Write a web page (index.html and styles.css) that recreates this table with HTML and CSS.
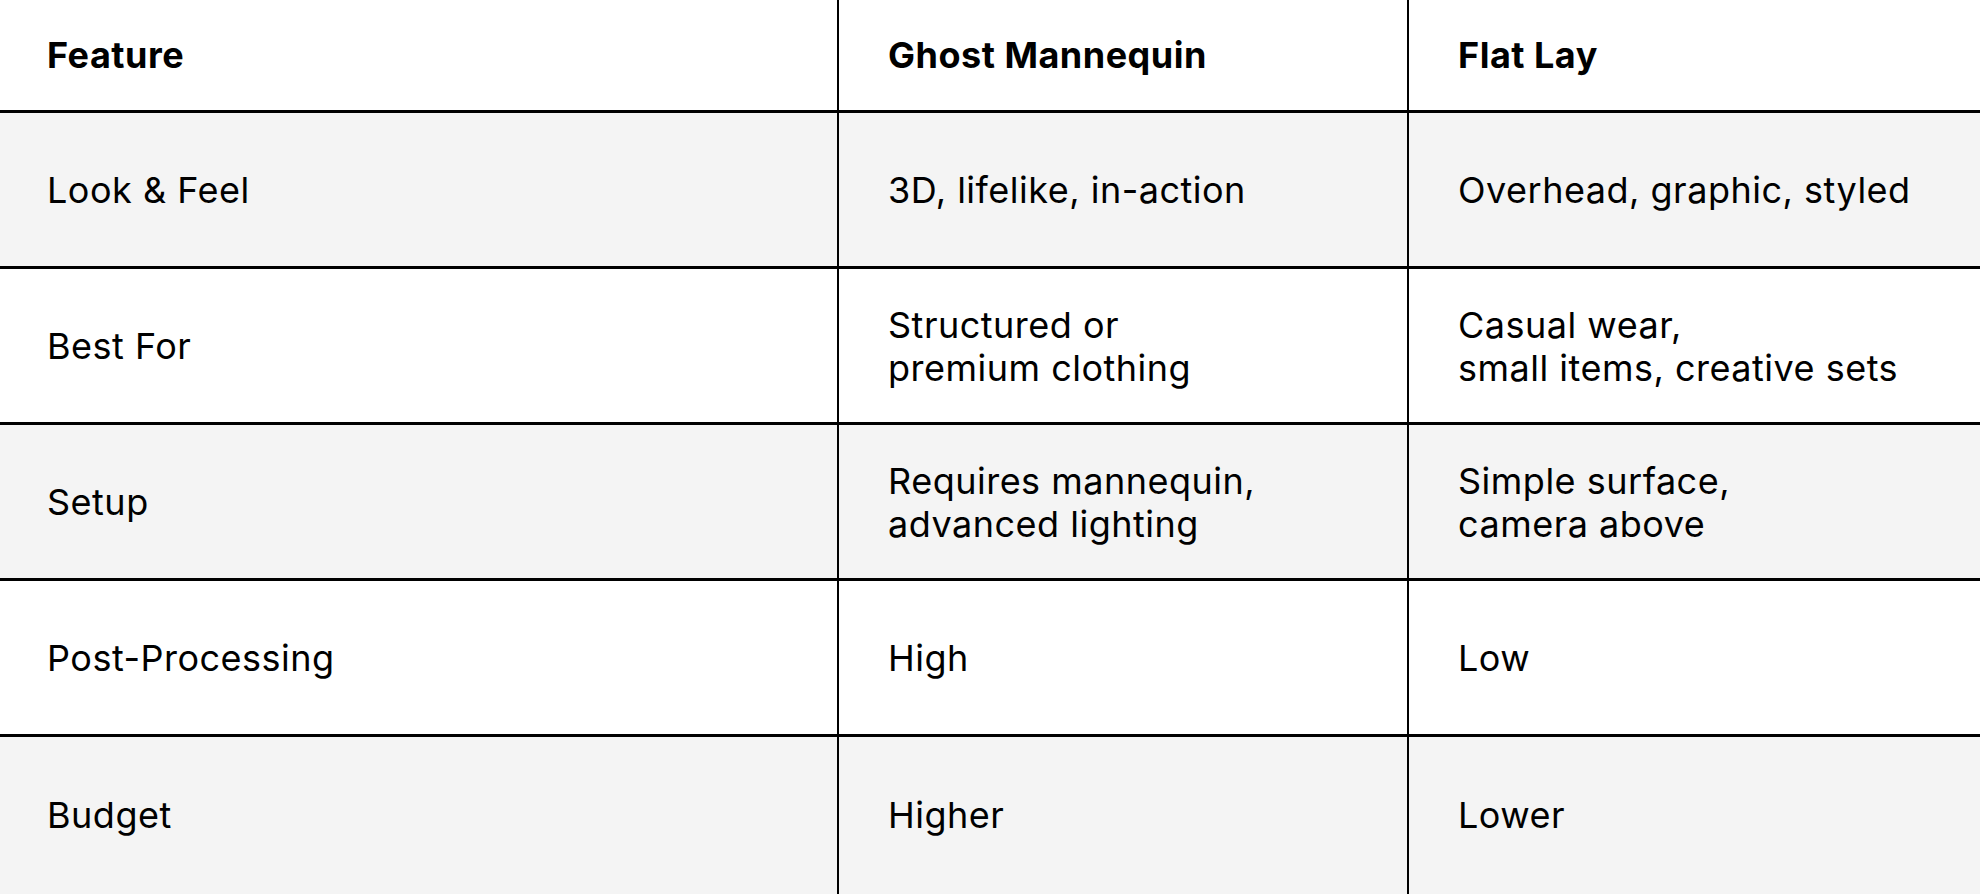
FILE: index.html
```html
<!DOCTYPE html>
<html lang="en">
<head>
<meta charset="utf-8">
<title>Ghost Mannequin vs Flat Lay</title>
<link rel="stylesheet" href="styles.css">
</head>
<body>
<div class="table">
  <div class="row head">
    <div class="cell">Feature</div>
    <div class="cell">Ghost Mannequin</div>
    <div class="cell">Flat Lay</div>
  </div>
  <div class="row alt">
    <div class="cell">Look &amp; Feel</div>
    <div class="cell">3D, lifelike, in-action</div>
    <div class="cell">Overhead, graphic, styled</div>
  </div>
  <div class="row">
    <div class="cell">Best For</div>
    <div class="cell">Structured or<br>premium clothing</div>
    <div class="cell">Casual wear,<br>small items, creative sets</div>
  </div>
  <div class="row alt">
    <div class="cell">Setup</div>
    <div class="cell">Requires mannequin,<br>advanced lighting</div>
    <div class="cell">Simple surface,<br>camera above</div>
  </div>
  <div class="row">
    <div class="cell">Post-Processing</div>
    <div class="cell">High</div>
    <div class="cell">Low</div>
  </div>
  <div class="row alt last">
    <div class="cell">Budget</div>
    <div class="cell">Higher</div>
    <div class="cell">Lower</div>
  </div>
</div>
</body>
</html>
```
FILE: styles.css
```css
html, body {
  margin: 0;
  padding: 0;
  background: #ffffff;
  overflow: hidden;
}
body {
  font-family: "Inter", "Liberation Sans", sans-serif;
  color: #000000;
}
.table {
  display: flex;
  flex-direction: column;
  width: 1980px;
}
.row {
  display: grid;
  grid-template-columns: 839px 570px 1fr;
  height: 156px;
  border-bottom: 3px solid #000;
  box-sizing: border-box;
  background: #ffffff;
}
.row.alt {
  background: #f4f4f4;
}
.row.head {
  height: 113px;
}
.row.last {
  height: 160px;
  border-bottom: none;
}
.cell {
  display: flex;
  align-items: center;
  padding-left: 47px;
  padding-top: 2px;
  font-size: 36px;
  line-height: 43px;
  font-weight: 400;
  letter-spacing: 0.5px;
}
.row.last .cell {
  padding-top: 0;
  padding-bottom: 4px;
}
.cell:nth-child(2),
.cell:nth-child(3) {
  padding-left: 49px;
}
.cell:nth-child(1),
.cell:nth-child(2) {
  border-right: 2px solid #000;
}
.head .cell {
  padding-top: 0;
  font-size: 36px;
  font-weight: 700;
  letter-spacing: 0.5px;
}
```
